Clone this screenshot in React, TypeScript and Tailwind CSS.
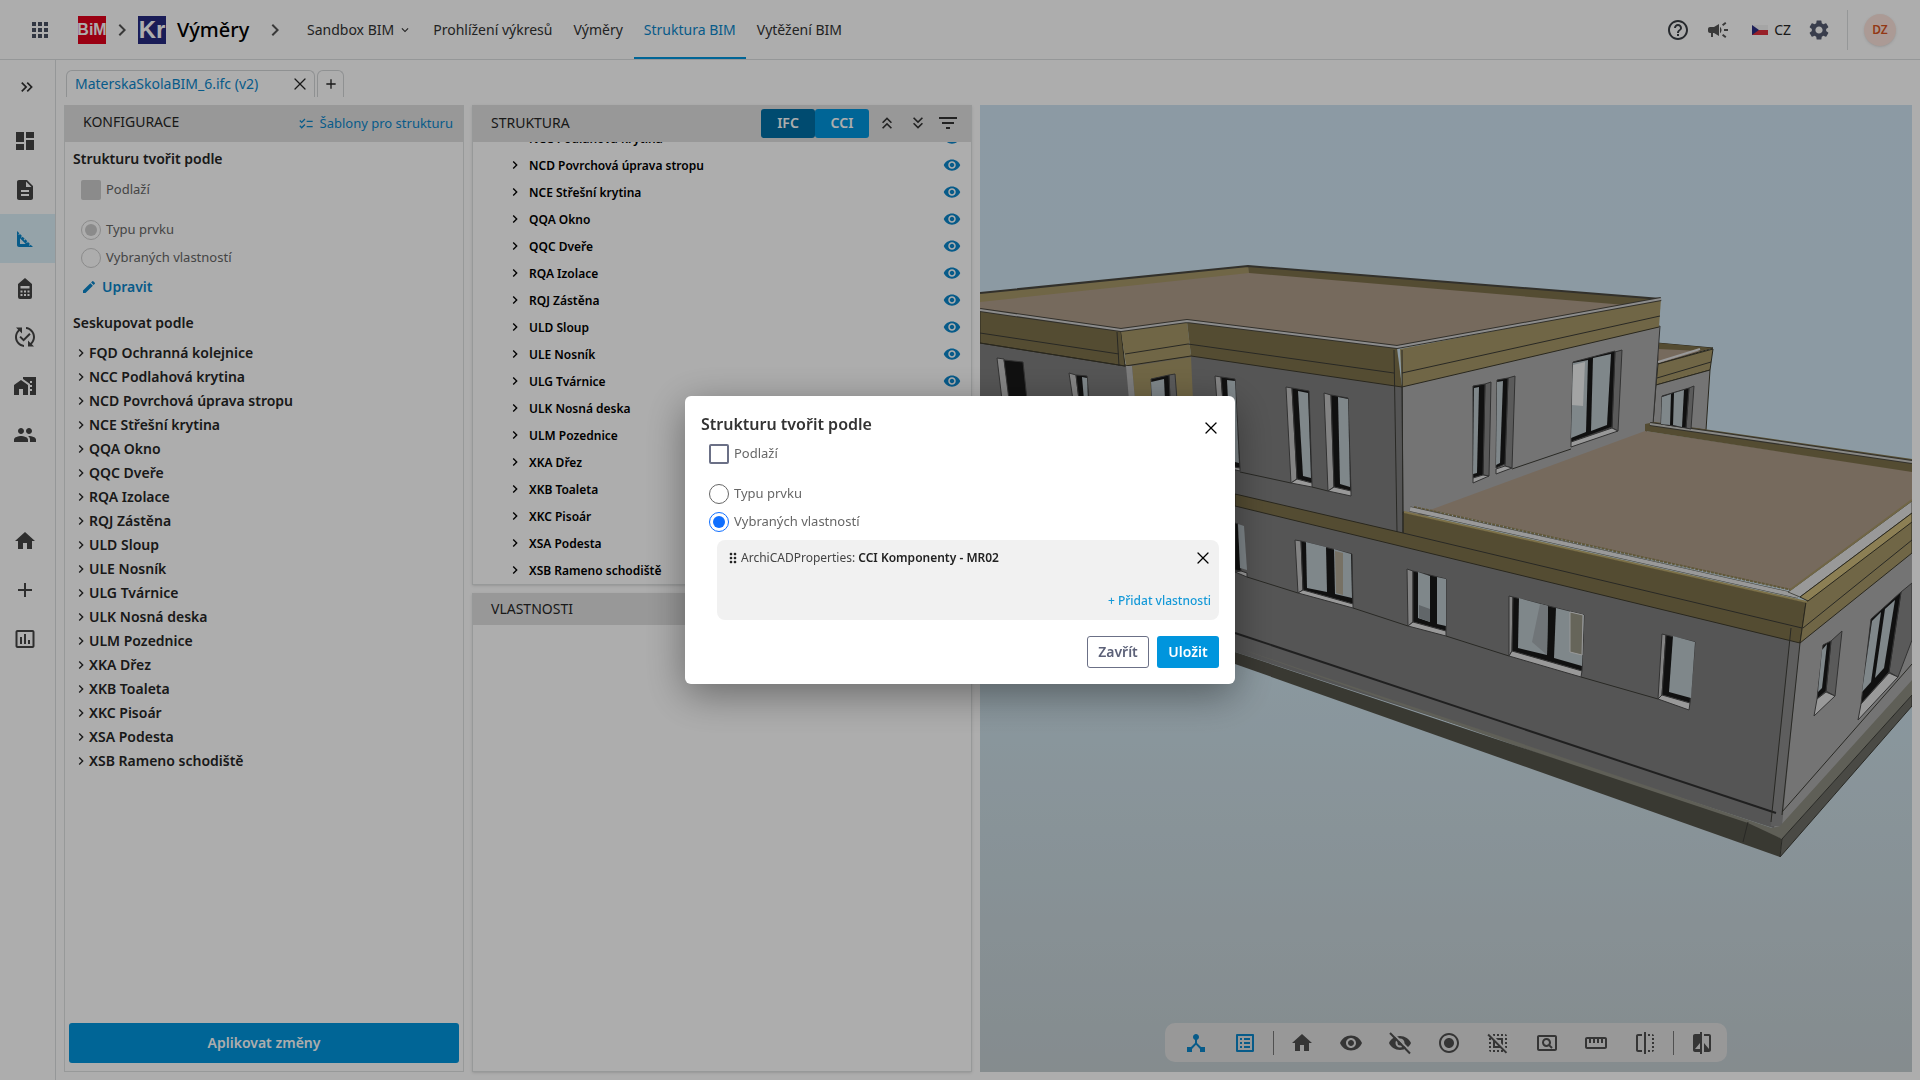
import React, { useState } from "react";
import { X } from "lucide-react";
import {
  MdAdd,
  MdApps,
  MdCampaign,
  MdChecklist,
  MdCompare,
  MdDashboard,
  MdDescription,
  MdDeselect,
  MdDeviceHub,
  MdDragIndicator,
  MdEdit,
  MdFilterList,
  MdFlip,
  MdHelpOutline,
  MdHome,
  MdHomeWork,
  MdInsertChartOutlined,
  MdKeyboardArrowDown,
  MdKeyboardArrowRight,
  MdKeyboardDoubleArrowDown,
  MdKeyboardDoubleArrowRight,
  MdKeyboardDoubleArrowUp,
  MdListAlt,
  MdOutlinePageview,
  MdPeople,
  MdPublishedWithChanges,
  MdRadioButtonChecked,
  MdSettings,
  MdSquareFoot,
  MdStraighten,
  MdVisibility,
} from "react-icons/md";

const GROUPS = [
  "FQD Ochranná kolejnice",
  "NCC Podlahová krytina",
  "NCD Povrchová úprava stropu",
  "NCE Střešní krytina",
  "QQA Okno",
  "QQC Dveře",
  "RQA Izolace",
  "RQJ Zástěna",
  "ULD Sloup",
  "ULE Nosník",
  "ULG Tvárnice",
  "ULK Nosná deska",
  "ULM Pozednice",
  "XKA Dřez",
  "XKB Toaleta",
  "XKC Pisoár",
  "XSA Podesta",
  "XSB Rameno schodiště",
];

type IconProps = { className?: string };

function HouseCalcIcon({ className }: IconProps) {
  return (
    <svg viewBox="0 0 24 24" className={className} fill="currentColor">
      <path
        fillRule="evenodd"
        d="M12 2l7 6v13a2 2 0 0 1-2 2H7a2 2 0 0 1-2-2V8zM7.500 10v2.500h9V10zM7.500 14.500v2h2v-2zm3.500 0v2h2v-2zm3.500 0v2h2v-2zm-7 3.500v2h2v-2zm3.500 0v2h2v-2zm3.500 0v2h2v-2z"
      />
    </svg>
  );
}

function HiddenEyeIcon({ className }: IconProps) {
  return (
    <svg viewBox="0 0 24 24" className={className} fill="currentColor">
      <path
        fillRule="evenodd"
        d="M12 5C7 5 2.700 8 1 12c1.700 4 6 7 11 7s9.300-3 11-7c-1.700-4-6-7-11-7zm0 2.500a4.500 4.500 0 1 1 0 9 4.500 4.500 0 0 1 0-9z"
      />
      <circle cx="12" cy="12" r="2.500" />
      <path d="M3 0.500L22.500 20" stroke="#e1e1e1" strokeWidth="2" />
      <path d="M2 2L22 22.500" stroke="currentColor" strokeWidth="2" />
    </svg>
  );
}

function CzechFlag() {
  return (
    <svg viewBox="0 0 16 10" className="h-2.5 w-4" aria-hidden="true">
      <rect width="16" height="5" fill="#f4f4f4" />
      <rect y="5" width="16" height="5" fill="#e0303c" />
      <path d="M0 0l7 5-7 5z" fill="#2c2f83" />
    </svg>
  );
}

function Logo({ text, className }: { text: string; className: string }) {
  return (
    <span
      className={`flex h-7 w-7 items-center justify-center whitespace-nowrap font-['Liberation_Sans_Narrow','Liberation_Sans',sans-serif] font-bold text-white ${className}`}
    >
      {text}
    </span>
  );
}

function Header() {
  const link = "flex h-full items-center border-y-2 border-t-transparent px-2.5";
  return (
    <header className="flex h-[60px] shrink-0 items-center border-b border-[#dcdfe0] bg-white">
      <button type="button" aria-label="Aplikace" className="ml-7 text-[#4b5263]">
        <MdApps className="h-6 w-6" />
      </button>
      <Logo text="BiM" className="ml-[26px] bg-[#e3001b] text-base" />
      <MdKeyboardArrowRight className="mx-1 h-6 w-6 text-[#555]" />
      <Logo text="Kr" className="bg-[#252a80] text-2xl" />
      <span className="ml-[11px] w-[70px] text-xl font-medium text-black">
        Výměry
      </span>
      <MdKeyboardArrowRight className="ml-4 h-6 w-6 text-[#555]" />
      <nav className="ml-2.5 flex h-full items-center gap-px text-sm text-[#333]">
        <button type="button" className="flex items-center gap-1 px-2.5">
          Sandbox BIM
          <MdKeyboardArrowDown className="h-3.5 w-3.5" />
        </button>
        <a href="#vykresy" className={`${link} border-b-transparent`}>
          Prohlížení výkresů
        </a>
        <a href="#vymery" className={`${link} border-b-transparent`}>
          Výměry
        </a>
        <a href="#struktura" className={`${link} border-b-[#0095dd] text-[#0b86cb]`}>
          Struktura BIM
        </a>
        <a href="#vytezeni" className={`${link} border-b-transparent`}>
          Vytěžení BIM
        </a>
      </nav>
      <div className="ml-auto flex items-center">
        <button type="button" aria-label="Nápověda" className="text-[#3a3f44]">
          <MdHelpOutline className="h-6 w-6" />
        </button>
        <button type="button" aria-label="Novinky" className="ml-4 text-[#555]">
          <MdCampaign className="h-6 w-6" />
        </button>
        <button type="button" className="ml-[22px] flex items-center gap-1.5 text-sm">
          <CzechFlag />
          CZ
        </button>
        <button type="button" aria-label="Nastavení" className="ml-4 text-[#545b70]">
          <MdSettings className="h-6 w-6" />
        </button>
        <span className="ml-4 h-10 w-px bg-[#dcdfe0]" />
        <button
          type="button"
          className="mr-6 ml-4 h-8 w-8 rounded-full bg-[#fce4dc] text-xs font-semibold text-[#d9531e] shadow"
        >
          DZ
        </button>
      </div>
    </header>
  );
}

function Sidebar() {
  const top = [
    { label: "Přehled", icon: MdDashboard },
    { label: "Dokumenty", icon: MdDescription },
    { label: "Výměry", icon: MdSquareFoot, active: true },
    { label: "Kalkulace", icon: HouseCalcIcon },
    { label: "Změny", icon: MdPublishedWithChanges },
    { label: "Stavby", icon: MdHomeWork },
    { label: "Uživatelé", icon: MdPeople },
  ];
  const bottom = [
    { label: "Domů", icon: MdHome },
    { label: "Přidat", icon: MdAdd },
    { label: "Reporty", icon: MdInsertChartOutlined },
  ];
  return (
    <aside className="flex w-14 shrink-0 flex-col border-r border-[#dcdfe0] text-[#454545]">
      <button
        type="button"
        aria-label="Rozbalit menu"
        className="mb-0.5 flex h-[54px] items-center justify-center pr-px text-[#333]"
      >
        <MdKeyboardDoubleArrowRight className="h-5 w-5" />
      </button>
      {top.map(({ label, icon: Icon, active }) => (
        <button
          key={label}
          type="button"
          aria-label={label}
          className={`flex h-[49px] items-center justify-center pr-1.5 ${
            active ? "bg-[#dcf1fa] text-[#0b86cb]" : ""
          }`}
        >
          <Icon className="h-6 w-6" />
        </button>
      ))}
      <div className="mt-[57px] flex flex-col">
        {bottom.map(({ label, icon: Icon }) => (
          <button
            key={label}
            type="button"
            aria-label={label}
            className="flex h-[49px] items-center justify-center pr-1.5"
          >
            <Icon className="h-6 w-6" />
          </button>
        ))}
      </div>
    </aside>
  );
}

function FileTabs() {
  return (
    <div className="mb-2 flex h-[27px] gap-0.5 pl-0.5">
      <div className="flex w-[249px] items-center justify-between rounded-t-md border border-b-0 border-[#d3d6d8] pr-1 pl-2">
        <a href="#soubor" className="text-sm text-[#0b86cb]">
          MaterskaSkolaBIM_6.ifc (v2)
        </a>
        <button type="button" aria-label="Zavřít záložku">
          <X className="h-5 w-5" strokeWidth={1.5} />
        </button>
      </div>
      <button
        type="button"
        aria-label="Nová záložka"
        className="flex w-[27px] items-center justify-center rounded-t-md border border-b-0 border-[#d3d6d8]"
      >
        <MdAdd className="h-4 w-4" />
      </button>
    </div>
  );
}

function Choice({
  type,
  name,
  label,
  ...rest
}: {
  type: "checkbox" | "radio";
  name: string;
  label: string;
} & React.InputHTMLAttributes<HTMLInputElement>) {
  const look =
    type === "checkbox"
      ? "rounded-[2px] border-2 border-[#6b7086] checked:bg-[#0f6fff] disabled:border-[#cdcdcd] disabled:bg-[#cdcdcd]"
      : "rounded-full border border-[#666] bg-clip-content p-[3px] checked:border-[#0f6fff] checked:bg-[#0f6fff] disabled:border-[#cdcdcd] disabled:checked:bg-[#cdcdcd]";
  return (
    <label className="flex h-5 items-center gap-[5px] text-[13px] text-[#666]">
      <input
        type={type}
        name={name}
        className={`h-5 w-5 shrink-0 appearance-none ${look}`}
        {...rest}
      />
      {label}
    </label>
  );
}

function ConfigPanel() {
  return (
    <section className="flex min-w-0 flex-col border border-t-0 border-[#dfe2e2]">
      <div className="flex h-[37px] shrink-0 items-center justify-between bg-[#e1e1e1] pr-2.5 pl-[18px]">
        <h2 className="mb-1 text-sm text-[#262626]">KONFIGURACE</h2>
        <button type="button" className="flex items-center gap-1.5 text-[13px] text-[#0b86cb]">
          <MdChecklist className="h-4 w-4" />
          Šablony pro strukturu
        </button>
      </div>
      <div className="flex min-h-0 flex-1 flex-col overflow-hidden px-2 pt-[7px] text-[#262626]">
        <h3 className="text-sm leading-5 font-semibold">Strukturu tvořit podle</h3>
        <div className="mt-[11px] pl-2">
          <Choice type="checkbox" name="cfg-floor" label="Podlaží" disabled />
          <div className="mt-5 flex flex-col gap-2">
            <Choice type="radio" name="cfg-mode" label="Typu prvku" disabled defaultChecked />
            <Choice type="radio" name="cfg-mode" label="Vybraných vlastností" disabled />
          </div>
          <button
            type="button"
            className="mt-[9px] flex h-5 items-center gap-[5px] text-sm font-semibold text-[#0b86cb]"
          >
            <MdEdit className="h-4 w-4" />
            Upravit
          </button>
        </div>
        <h3 className="mt-4 text-sm leading-5 font-semibold">Seskupovat podle</h3>
        <ul className="mt-2">
          {GROUPS.map((g) => (
            <li key={g}>
              <button type="button" className="flex h-6 items-center text-sm font-semibold">
                <MdKeyboardArrowRight className="h-4 w-4" />
                {g}
              </button>
            </li>
          ))}
        </ul>
      </div>
      <button
        type="button"
        className="mx-1 mb-2 h-10 shrink-0 rounded-[3px] bg-[#0095dd] text-sm font-semibold text-white"
      >
        Aplikovat změny
      </button>
    </section>
  );
}

function StructurePanel() {
  return (
    <section className="flex min-h-0 flex-1 flex-col border border-t-0 border-[#dfe2e2] shadow">
      <div className="z-10 flex h-[37px] shrink-0 items-center bg-[#e1e1e1] pr-[11px] pb-px pl-[18px] text-[#333]">
        <h2 className="mr-auto text-sm text-[#262626]">STRUKTURA</h2>
        <button
          type="button"
          className="h-[29px] w-[54px] rounded-[3px] bg-[#016fa5] text-sm font-semibold text-white"
        >
          IFC
        </button>
        <button
          type="button"
          className="h-[29px] w-[54px] rounded-[3px] bg-[#0095dd] text-sm font-semibold text-white"
        >
          CCI
        </button>
        <button type="button" aria-label="Sbalit vše" className="ml-2">
          <MdKeyboardDoubleArrowUp className="h-5 w-5" />
        </button>
        <button type="button" aria-label="Rozbalit vše" className="ml-[11px]">
          <MdKeyboardDoubleArrowDown className="h-5 w-5" />
        </button>
        <button type="button" aria-label="Filtr" className="ml-2">
          <MdFilterList className="h-6 w-6" />
        </button>
      </div>
      <div className="min-h-0 flex-1 overflow-hidden">
        <ul className="-mt-[17px]">
          {GROUPS.slice(1).map((g) => (
            <li key={g} className="flex h-[27px] items-center pr-2.5 pl-[34px] text-xs">
              <button type="button" className="flex items-center gap-1.5 font-semibold text-black">
                <MdKeyboardArrowRight className="mb-0.5 h-4 w-4" />
                {g}
              </button>
              <button
                type="button"
                aria-label={`Zobrazit ${g}`}
                className="mb-0.5 ml-auto text-[#0b86cb]"
              >
                <MdVisibility className="h-[18px] w-[18px]" />
              </button>
            </li>
          ))}
        </ul>
      </div>
    </section>
  );
}

function PropertiesPanel() {
  return (
    <section className="flex min-h-0 flex-1 flex-col border border-t-0 border-[#dfe2e2] shadow">
      <div className="flex h-8 items-center bg-[#e1e1e1] pl-[18px]">
        <h2 className="text-sm text-[#262626]">VLASTNOSTI</h2>
      </div>
    </section>
  );
}

type WindowShape = {
  jamb?: string;
  frame: string;
  glass: string[];
  sill?: string;
  shade?: boolean;
};

const WINDOWS: WindowShape[] = [
  // upper floor, front
  { jamb: "997,358 1004,359 1010,400 1002,400", frame: "1004,360 1023,362 1027,400 1009,400", glass: [] },
  { jamb: "1069,373 1076,375 1079,400 1073,400", frame: "1076,375 1087,376 1089,400 1079,400", glass: ["1082,377 1087,378 1088,400 1084,400"] },
  { jamb: "1169,375 1175,374 1177,400 1170,400", frame: "1151,379 1169,375 1170,400 1152,400", glass: ["1151,382 1164,379 1165,400 1152,400"], shade: true },
  { jamb: "1215,376 1221,377 1228,466 1222,468", frame: "1221,377 1235,379 1240,468 1228,466", glass: ["1227,380 1235,381 1239,463 1231,461"], sill: "1222,467 1228,466 1240,468 1240,471" },
  { jamb: "1286,387 1292,388 1297,479 1291,483", frame: "1292,388 1309,391 1312,483 1297,479", glass: ["1298,391 1308,393 1311,478 1303,476"], sill: "1291,483 1297,479 1312,483 1312,487" },
  { jamb: "1324,393 1331,395 1334,487 1328,491", frame: "1331,395 1348,398 1351,491 1334,487", glass: ["1338,397 1348,399 1350,487 1340,484"], sill: "1328,491 1334,487 1351,491 1351,496" },
  // upper floor, side
  { jamb: "1485,384 1491,382 1489,476 1483,475", frame: "1473,386 1485,384 1483,475 1473,478", glass: ["1474,388 1479,387 1477,473 1473,474"], sill: "1473,478 1483,475 1489,476 1473,483", shade: true },
  { jamb: "1508,378 1515,376 1512,468 1505,466", frame: "1497,380 1508,378 1505,464 1496,468", glass: ["1497,382 1503,381 1500,463 1496,465"], sill: "1496,469 1505,466 1512,468 1496,474", shade: true },
  { jamb: "1615,352 1622,350 1618,431 1612,428", frame: "1573,362 1615,351 1612,427 1571,442", glass: ["1573,363 1588,360 1586,432 1571,438", "1593,358 1611,354 1607,425 1591,431"], sill: "1571,442 1612,428 1618,431 1571,447", shade: true },
  { jamb: "1689,388 1694,386 1691,429 1686,428", frame: "1662,396 1689,388 1686,428 1661,424", glass: ["1662,397 1671,394 1670,425 1661,424", "1674,393 1684,390 1682,427 1673,425"], shade: true },
  // ground floor, front
  { frame: "1235,523 1238,524 1241,571 1235,570", glass: ["1238,524 1244,526 1247,570 1240,568"], sill: "1235,572 1241,571 1247,573 1247,577" },
  { jamb: "1295,540 1301,541 1303,590 1298,593", frame: "1301,541 1352,554 1353,604 1303,590", glass: ["1306,542 1326,547 1327,592 1307,588", "1334,549 1351,554 1352,598 1335,594"], sill: "1298,593 1303,590 1353,604 1353,608" },
  { jamb: "1407,569 1413,571 1413,622 1408,626", frame: "1413,571 1446,579 1446,631 1413,622", glass: ["1418,572 1430,576 1430,622 1418,618", "1437,577 1446,579 1446,626 1437,624"], sill: "1408,626 1413,622 1446,631 1446,636" },
  { jamb: "1509,596 1513,597 1512,651 1509,656", frame: "1513,597 1584,615 1582,671 1512,651", glass: ["1519,598 1548,606 1547,655 1518,648", "1556,608 1584,615 1582,666 1554,658"], sill: "1509,656 1512,651 1582,671 1581,677" },
  { jamb: "1662,634 1666,635 1662,695 1658,699", frame: "1666,635 1695,642 1690,703 1662,695", glass: ["1673,636 1695,642 1691,698 1669,692"], sill: "1658,699 1662,695 1690,703 1689,710" },
  // ground floor, side
  { jamb: "1831,641 1842,631 1835,696 1826,691", frame: "1823,645 1831,641 1826,691 1817,699", glass: ["1822,650 1827,644 1822,688 1818,692"], sill: "1817,699 1826,692 1835,696 1814,716", shade: true },
  { jamb: "1901,592 1912,583 1912,640 1898,677 1889,672", frame: "1871,619 1901,592 1889,672 1861,704", glass: ["1872,621 1881,612 1871,682 1862,692", "1885,609 1895,600 1884,668 1875,678"], sill: "1861,704 1889,673 1898,677 1858,720", shade: true },
];

const SEAMS = [
  "980,333 1119,354",
  "1125,354 1188,344 1394,373",
  "1402,373 1660,316",
  "1117,332 1119,366",
  "1394,350 1397,532",
  "1402,350 1403,533",
  "1240,472 1291,483",
  "1312,487 1328,491",
  "1512,469 1571,449",
  "1403,533 1802,628",
  "1803,628 1912,540",
  "1657,378 1711,362",
  "1247,577 1298,593",
  "1353,608 1408,626",
  "1446,636 1509,656",
  "1581,677 1658,699",
  "1791,628 1771,822",
  "1800,643 1782,815",
  "1782,812 1912,664",
  "1748,822 1743,842",
];

function BuildingModel() {
  return (
    <svg
      viewBox="980 105 932 967"
      preserveAspectRatio="xMidYMid slice"
      className="h-full w-full"
      role="img"
      aria-label="3D model budovy"
    >
      <defs>
        <linearGradient id="sky" x1="0" y1="0" x2="0" y2="1">
          <stop offset="0" stopColor="#cee4f2" />
          <stop offset="0.5" stopColor="#cee4ef" />
          <stop offset="1" stopColor="#c4ced2" />
        </linearGradient>
      </defs>
      <rect x="980" y="105" width="932" height="967" fill="url(#sky)" />

      {/* rear annex */}
      <g stroke="#3d3a2c" strokeWidth="1">
        <polygon points="1657,343 1713,348 1658,364" fill="#af9c8a" />
        <polygon points="1658,343 1713,348 1700,351 1658,349" fill="#7d714b" stroke="none" />
        <polygon points="1658,364 1713,349 1710,370 1656,385" fill="#a69767" />
        <polygon points="1656,385 1710,370 1706,430 1653,424" fill="#acacac" />
      </g>
      <path d="M1658 362L1700 349" stroke="#e2e2e2" strokeWidth="2" />

      {/* walls */}
      <polygon
        points="980,340 1125,364 1191,354 1402,385 1403,533 1802,640 1776,829 1235,652 980,600"
        fill="#7e7e7e"
      />
      <polygon points="1402,385 1660,326 1653,424 1645,433 1432,515 1403,515" fill="#acacac" stroke="#4a4a4a" />
      <polygon points="1800,641 1912,551 1912,690 1782,838 1774,829" fill="#acacac" />
      <polygon points="1791,628 1800,643 1782,826 1771,826" fill="#8b8b8b" />

      {/* upper roof */}
      <polygon points="980,293 1248,266 1661,299 1397,347 1187,321 1121,331 980,311" fill="#af9c8a" />
      <polygon points="980,293 1248,266 1249,273 980,302" fill="#a69767" />
      <polygon points="1248,266 1661,299 1625,305 1249,273" fill="#7d714b" />
      <path d="M980 293L1248 266L1661 299" fill="none" stroke="#4a4840" strokeWidth="2" />
      <polygon points="980,311 1121,331 1125,366 980,343" fill="#7d714b" stroke="#3d3a2c" />
      <polygon points="1121,331 1187,322 1191,356 1126,366" fill="#a69767" />
      <polygon points="1187,322 1397,348 1402,387 1191,356" fill="#7d714b" />
      <polygon points="1400,349 1661,299 1659,327 1402,387" fill="#a69767" />
      <path
        d="M980 343L1125 366L1191 356L1402 387L1659 327"
        fill="none"
        stroke="#3d3a2c"
      />
      <path
        d="M980 310L1121 330L1187 321L1397 347L1661 299"
        fill="none"
        stroke="#4a4840"
        strokeWidth="4"
        strokeLinejoin="bevel"
      />
      <path
        d="M980 310L1121 330L1187 321L1397 347L1661 299"
        fill="none"
        stroke="#cfcfcf"
        strokeWidth="2"
        strokeLinejoin="bevel"
      />
      <polygon points="1132,366 1191,357 1193,400 1135,400" fill="#a69767" />
      <polygon points="1126,366 1132,366 1135,400 1129,400" fill="#b8b8b8" />

      {/* lower roof */}
      <polygon points="1430,510 1645,431 1912,471 1912,501 1790,590" fill="#af9c8a" />
      <polygon points="1645,424 1655,422 1912,459 1912,472 1645,431" fill="#7d714b" />
      <path d="M1650 424L1912 462" stroke="#4a4840" strokeWidth="4" />
      <path d="M1650 424L1912 462" stroke="#c9c9c4" strokeWidth="2" />
      <polygon
        points="1403,512 1806,602 1800,643 1235,506 1235,494 1403,533"
        fill="#7d714b"
        stroke="#3d3a2c"
      />
      <polygon points="1806,602 1912,521 1912,553 1800,643" fill="#a69767" stroke="#3d3a2c" />
      <path d="M1414 507L1792 590" stroke="#8e8254" strokeWidth="2" strokeDasharray="3 1" />
      <path d="M1410 509L1798 596" stroke="#5c5a50" strokeWidth="5" />
      <path d="M1410 509L1798 596" stroke="#e2e2e2" strokeWidth="4" />
      <path d="M1404 512L1807 602" stroke="#b8a76c" strokeWidth="2" />
      <polygon points="1788,592 1800,597 1912,513 1912,501" fill="#e2e2e2" stroke="#6a6a60" />
      <polygon points="1800,597 1808,601 1912,522 1912,513" fill="#cebb7d" stroke="#3d3a2c" />
      <path d="M1790 590L1912 500" stroke="#a69767" strokeWidth="2" />

      {/* foundation */}
      <path d="M1235 633L1776 813" stroke="#303030" strokeWidth="2" />
      <polygon points="1235,647 1772,828 1780,826 1912,680 1912,695 1782,839" fill="#8c8c80" />
      <polygon points="1235,652 1748,823 1782,839 1780,857 1235,664" fill="#55544b" />
      <polygon points="1782,839 1912,695 1912,706 1780,857" fill="#6e6e66" stroke="#3c3c36" />

      {SEAMS.map((points) => (
        <polyline key={points} points={points} fill="none" stroke="#3c3c36" strokeWidth="1" />
      ))}

      {WINDOWS.map((w) => (
        <g key={w.frame} stroke="#4a4a4a" strokeWidth="1">
          {w.jamb && <polygon points={w.jamb} fill={w.shade ? "#858585" : "#c2c2c2"} />}
          <polygon points={w.frame} fill="#191919" />
          {w.glass.map((g) => (
            <polygon key={g} points={g} fill="#bcc7cc" stroke="none" />
          ))}
          {w.sill && <polygon points={w.sill} fill="#e2e2e2" />}
        </g>
      ))}
      {/* things seen through the glass */}
      <polygon points="1573,365 1585,362 1583,406 1572,405" fill="#f0f2f2" />
      <polygon points="1335,551 1343,553 1343,595 1336,593" fill="#b0a794" />
      <polygon points="1570,612 1583,615 1582,655 1570,652" fill="#979585" stroke="#e2e2e2" />
      <polygon points="1540,604 1548,606 1547,655 1532,642" fill="#a5adb1" />
      <polygon points="1419,605 1430,609 1430,622 1419,618" fill="#8f979b" />
    </svg>
  );
}

function Viewer() {
  const tools = [
    { label: "Procházet", icon: MdHome },
    { label: "Zobrazit vše", icon: MdVisibility },
    { label: "Skrýt", icon: HiddenEyeIcon },
    { label: "Izolovat", icon: MdRadioButtonChecked },
    { label: "Zrušit výběr", icon: MdDeselect },
    { label: "Přiblížit výběr", icon: MdOutlinePageview },
    { label: "Měření", icon: MdStraighten },
    { label: "Řez", icon: MdFlip },
  ];
  const btn = "flex h-full w-[49px] items-center justify-center";
  return (
    <section className="relative min-w-0 overflow-hidden">
      <div className="absolute inset-0">
        <BuildingModel />
      </div>
      <div className="absolute bottom-2.5 left-1/2 flex h-[39px] -translate-x-1/2 items-center rounded-[10px] bg-[#e1e1e1] pr-px pl-1.5 text-[#4f4f4f]">
        <button type="button" aria-label="Struktura" className={`${btn} text-[#0b86cb]`}>
          <MdDeviceHub className="h-6 w-6" />
        </button>
        <button type="button" aria-label="Vlastnosti" className={`${btn} text-[#0b86cb]`}>
          <MdListAlt className="h-6 w-6" />
        </button>
        <span className="mr-[3px] ml-1 h-6 w-px bg-[#777]" />
        {tools.map(({ label, icon: Icon }) => (
          <button key={label} type="button" aria-label={label} className={btn}>
            <Icon className="h-6 w-6" />
          </button>
        ))}
        <span className="mr-[3px] ml-1 h-6 w-px bg-[#777]" />
        <button type="button" aria-label="Porovnat" className={btn}>
          <MdCompare className="h-6 w-6" />
        </button>
      </div>
    </section>
  );
}

function StructureDialog({ onClose }: { onClose: () => void }) {
  const [mode, setMode] = useState("props");

  return (
    <div className="fixed inset-0 z-50 flex items-center justify-center bg-black/32">
      <div
        role="dialog"
        aria-modal="true"
        aria-labelledby="dialog-title"
        className="w-full max-w-[550px] rounded-md bg-white p-4 shadow-[0_10px_40px_rgba(0,0,0,0.4)]"
      >
        <div className="flex h-6 items-start justify-between">
          <h2 id="dialog-title" className="text-base leading-6 font-semibold text-[#333]">
            Strukturu tvořit podle
          </h2>
          <button
            type="button"
            aria-label="Zavřít okno"
            onClick={onClose}
            className="mt-1.5 mr-[-2px] text-black"
          >
            <X className="h-5 w-5" strokeWidth={1.5} />
          </button>
        </div>
        <div className="mt-2 pl-2">
          <Choice type="checkbox" name="floor" label="Podlaží" />
          <div className="mt-5 flex flex-col gap-2">
            <Choice
              type="radio"
              name="mode"
              label="Typu prvku"
              checked={mode === "type"}
              onChange={() => setMode("type")}
            />
            <Choice
              type="radio"
              name="mode"
              label="Vybraných vlastností"
              checked={mode === "props"}
              onChange={() => setMode("props")}
            />
          </div>
        </div>
        <div className="mt-2 ml-4 flex h-20 flex-col justify-between rounded-lg bg-[#f1f1f1] px-2 pt-2 pb-[11px] text-xs text-[#444]">
          <div className="flex h-5 items-center">
            <MdDragIndicator className="h-4 w-4 text-[#222]" />
            <span>
              ArchiCADProperties:{" "}
              <b className="font-semibold text-[#222]">CCI Komponenty - MR02</b>
            </span>
            <button
              type="button"
              aria-label="Odebrat vlastnost"
              className="mr-[-2px] ml-auto text-black"
            >
              <X className="h-5 w-5" strokeWidth={1.5} />
            </button>
          </div>
          <button type="button" className="self-end font-medium text-[#1499d8]">
            + Přidat vlastnosti
          </button>
        </div>
        <div className="mt-4 flex justify-end gap-2 text-sm font-semibold">
          <button
            type="button"
            onClick={onClose}
            className="h-8 w-[62px] rounded-[3px] border border-[#6b7086] text-[#5c6178]"
          >
            Zavřít
          </button>
          <button
            type="button"
            onClick={onClose}
            className="h-8 w-[62px] rounded-[3px] bg-[#0095dd] text-white"
          >
            Uložit
          </button>
        </div>
      </div>
    </div>
  );
}

export default function App() {
  const [open, setOpen] = useState(true);

  return (
    <div className="flex h-screen flex-col overflow-hidden bg-white font-['Noto_Sans',sans-serif] text-[#262626]">
      <Header />
      <div className="flex min-h-0 flex-1">
        <Sidebar />
        <main className="flex min-w-0 flex-1 flex-col px-2 pt-2.5 pb-2">
          <FileTabs />
          <div className="grid min-h-0 flex-1 grid-cols-[400fr_500fr_932fr] gap-2">
            <ConfigPanel />
            <div className="flex min-h-0 min-w-0 flex-col gap-2">
              <StructurePanel />
              <PropertiesPanel />
            </div>
            <Viewer />
          </div>
        </main>
      </div>
      {open && <StructureDialog onClose={() => setOpen(false)} />}
    </div>
  );
}
